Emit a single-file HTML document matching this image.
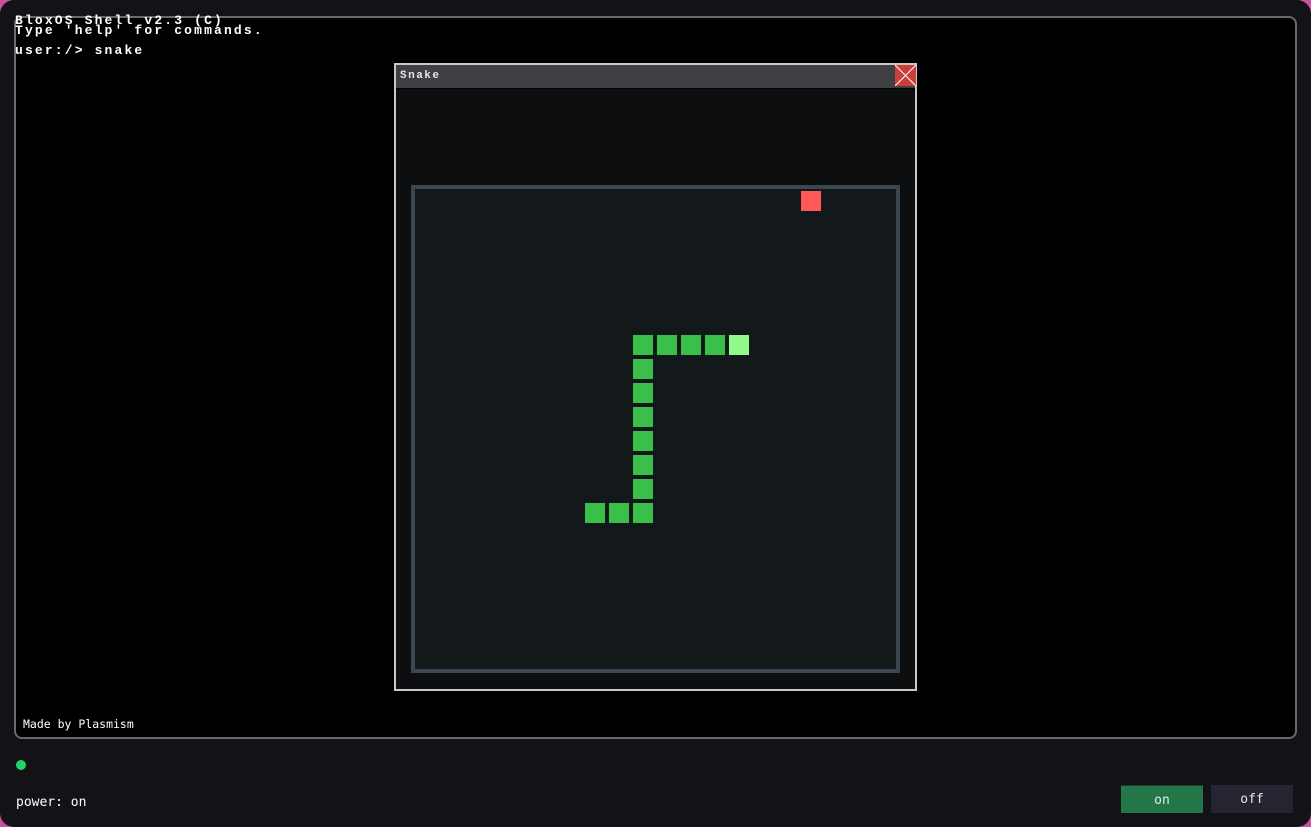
<!DOCTYPE html>
<html><head><meta charset="utf-8"><style>
*{margin:0;padding:0;box-sizing:border-box}
html,body{width:1311px;height:827px;overflow:hidden;background:#ce4f9a}
#app{position:absolute;left:0;top:0;width:1311px;height:827px;background:#121217;border-radius:14px}
#screen{position:absolute;left:14px;top:16px;width:1283px;height:723px;background:#000;border:2px solid #6a6a6e;border-radius:8px}
.t{position:absolute;left:15px;font-family:"Liberation Mono",monospace;font-weight:bold;font-size:13px;color:#fff;line-height:12px;white-space:pre;letter-spacing:2.15px}
#win{position:absolute;left:394px;top:63px;width:523px;height:628px;background:#0d0e10;border:2px solid #c8c8c8}
#tb{position:absolute;left:0;top:0;width:519px;height:24px;background:#3f3f44;border-bottom:1px solid #000}
#tb span{position:absolute;left:4px;top:5px;font-family:"Liberation Mono",monospace;font-size:11px;font-weight:bold;color:#e6e6e6;letter-spacing:1.5px}
#cl{position:absolute;left:499px;top:0;width:21px;height:21px;background:#c9403a}
#board{position:absolute;left:15px;top:120px;width:489px;height:488px;background:#13181b;border:4px solid #3a4650}
.c{position:absolute;width:20px;height:20px;background:#3abf4b}
.bot{position:absolute;font-family:"DejaVu Sans Mono","Liberation Mono",monospace;color:#fff}
.btn{position:absolute;top:785px;width:82px;height:28px;font-family:"DejaVu Sans Mono",monospace;font-size:13px;color:#e8e8e8;text-align:center;line-height:29px}
</style></head><body><div id="app">
<div id="screen"></div>
<div class="t" style="top:15px">BloxOS Shell v2.3 (C)</div>
<div class="t" style="top:25px">Type 'help' for commands.</div>
<div class="t" style="top:45px">user:/&gt; snake</div>
<div id="win">
<div id="tb"><span>Snake</span></div>
<div id="cl"><svg width="21" height="21"><path d="M0 0L21 21M21 0L0 21" stroke="#fff" stroke-width="1"/></svg></div>
<div id="board"></div>
</div>
<div style="position:absolute;left:801px;top:191px;width:20px;height:20px;background:#ff5959"></div>
<div class="c" style="left:633px;top:335px"></div>
<div class="c" style="left:657px;top:335px"></div>
<div class="c" style="left:681px;top:335px"></div>
<div class="c" style="left:705px;top:335px"></div>
<div class="c" style="left:729px;top:335px;background:#8ff98a"></div>
<div class="c" style="left:633px;top:359px"></div>
<div class="c" style="left:633px;top:383px"></div>
<div class="c" style="left:633px;top:407px"></div>
<div class="c" style="left:633px;top:431px"></div>
<div class="c" style="left:633px;top:455px"></div>
<div class="c" style="left:633px;top:479px"></div>
<div class="c" style="left:633px;top:503px"></div>
<div class="c" style="left:609px;top:503px"></div>
<div class="c" style="left:585px;top:503px"></div>
<div class="bot" style="left:23px;top:717px;font-size:11.5px">Made by Plasmism</div>
<div style="position:absolute;left:16px;top:760px;width:10px;height:10px;border-radius:50%;background:#22d36c"></div>
<div class="bot" style="left:16px;top:795px;font-size:13px">power: on</div>
<div class="btn" style="left:1121px;background:#237647;border-top:1px solid #1e3a2a">on</div>
<div class="btn" style="left:1211px;background:#242530">off</div>
</div></body></html>
